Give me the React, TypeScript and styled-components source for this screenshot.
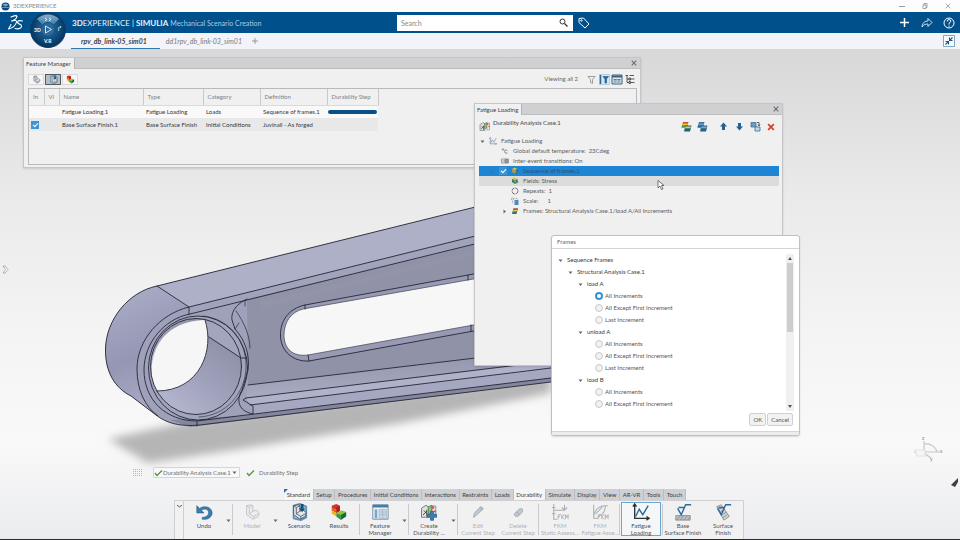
import React from 'react';
import styled, { createGlobalStyle, css } from 'styled-components';

const Global = createGlobalStyle`
  * { box-sizing: border-box; }
  body { margin: 0; font-family: Lato, "Noto Sans", sans-serif; font-size: 6px; line-height: 8px; color: #444; }
  button { border: 0; padding: 0; background: none; font: inherit; color: inherit; display: flex; align-items: center; justify-content: center; }
  input, select { font: inherit; color: inherit; margin: 0; }
  svg { display: block; flex: none; }
`;

const Page = styled.div`
  min-height: 100vh; display: flex; flex-direction: column; overflow: hidden; position: relative;
  border-bottom: 1px solid #2b2b2e;
`;

/* ---------- header ---------- */
const TitleBar = styled.div`
  height: 12px; display: flex; align-items: center; gap: 3px; padding: 0 8px 0 1px; background: #fdfdfd; color: #8a8a8a;
`;
const WindowButtons = styled.div`
  margin-left: auto; display: flex; gap: 15px;
  button { width: 8px; height: 8px; }
`;
const BlueBar = styled.header`
  height: 21px; display: grid; grid-template-columns: 397fr 176fr 387fr; align-items: center; background: #00508b; color: #fff;
`;
const Brand = styled.div`
  display: flex; align-items: center; padding-left: 7px;
`;
const BrandText = styled.h1`
  margin: 0 0 0 48px; font-size: 8px; line-height: 12px; font-weight: 400; display: flex; align-items: baseline; gap: 2px; white-space: nowrap; color: #eaf2f9;
  small { font-size: 7px; color: #a9cbe6; }
`;
const SearchBox = styled.label`
  height: 16px; background: #fff; display: flex; align-items: center; padding: 0 5px 0 4px; color: #888;
  input { flex: 1; min-width: 0; border: 0; outline: 0; background: none; padding: 0; font-size: 7px; }
  input::placeholder { color: #888; }
`;
const HeaderActions = styled.div`
  display: flex; align-items: center; gap: 9px; padding: 0 5px 0 4px;
  button { width: 13px; height: 13px; }
  button:first-child { margin-right: auto; }
`;
const CompassButton = styled.button`
  position: absolute; left: 29px; top: 11px; z-index: 3; border-radius: 50%;
`;
const TabBar = styled.nav`
  height: 16px; display: flex; align-items: stretch; padding: 0 5px 0 71px; background: #f2f4f9; color: #7c7c80;
  > button:last-child { margin-left: auto; }
`;
const DocTab = styled.button<{ $active?: boolean }>`
  padding: 0 10px 0 6px; font-size: 7px; font-style: italic;
  ${p => p.$active && css`color: #444; font-weight: 700; border-bottom: 1px solid #2a7ab0; padding: 1px 13px 0 10px;`}
`;

/* ---------- desktop ---------- */
const Workspace = styled.main`
  flex: 1; position: relative; display: flex; flex-direction: column; justify-content: flex-end;
  background: linear-gradient(#d8d8d9, #eaeaea 30%, #f4f4f4 58%, #f9f9f9 80%, #ebecef);
`;
const Scene = styled.svg`
  position: absolute; inset: 0; width: 100%; height: 100%;
`;
const Window = styled.section<{ $left: number; $top: number; $width: number; $height: number }>`
  position: absolute; left: ${p => p.$left}px; top: ${p => p.$top}px; width: ${p => p.$width}px; min-height: ${p => p.$height}px;
  display: flex; flex-direction: column; background: #f0f0f0; border: 1px solid #c6c6c8; box-shadow: 0 1px 2px #0002;
`;
const Caption = styled.div`
  height: 11px; display: flex; align-items: stretch; background: #cfd0d2; border-bottom: 1px solid #bdbdc0;
  h2 { margin: 0 0 -1px; padding: 1px 3px 0 2px; font-size: 6px; line-height: 10px; font-weight: 400; background: #f0f0f0; border-right: 1px solid #b5b5b8; }
  button { margin-left: auto; width: 12px; }
`;
const Toolbar = styled.div`
  display: flex; align-items: center; height: 19px; padding: 1px 4px 0 4px; gap: 1px;
  span { margin-left: auto; margin-right: 6px; color: #666; }
`;
const ToolButton = styled.button<{ $boxed?: boolean; $on?: boolean }>`
  width: ${p => (p.$boxed ? 16 : 12)}px; height: 11px;
  ${p => p.$boxed && css`border: 1px solid #d9d9db; background: #f6f6f6;`}
  ${p => p.$on && css`border: 1px solid #555a60; background: #b9bcc4;`}
`;
const TableFrame = styled.div`
  flex: 1; margin: 0 3px 2px 4px; border: 1px solid #b9b9bc;
`;
const FeatureTable = styled.table`
  border-collapse: collapse; table-layout: fixed; width: 349px;
  th, td { padding: 0 0 0 3px; text-align: left; font-weight: 400; height: 13px; overflow: hidden; white-space: nowrap; color: #383838; }
  th { height: 16px; padding-left: 4px; color: #7d8188; border-right: 1px solid #c9c9cc; border-bottom: 1px solid #dadadc; }
  tbody tr:first-child { background: #f9f9f9; }
  tbody tr:last-child { background: #e8e8e8; }
  td:first-child { padding-left: 2px; }
  td:last-child { padding: 0 1px; }
`;
const Progress = styled.div`
  height: 4px; border-radius: 2px; background: #0b4f87;
`;
const Check = styled.input`
  appearance: none; display: block; width: 8px; height: 8px; background: #3c94d6; position: relative;
  &::after { content: ""; position: absolute; left: 2px; top: 2px; width: 4px; height: 2px; border: solid #fff; border-width: 0 0 1px 1px; transform: rotate(-45deg); }
`;

const CaseHeader = styled.div`
  display: flex; height: 21px; padding: 2px 5px 0 4px; gap: 2px; align-items: center;
  > span { font-size: 6px; align-self: flex-start; margin-top: 2px; margin-right: auto; }
`;
const CaseTools = styled.div`
  display: flex; gap: 4px; margin-left: 7px;
`;
const Tree = styled.ul`
  list-style: none; margin: 0; padding: 0 3px 0 4px;
`;
const TreeRow = styled.li<{ $indent: number; $tone?: 'selected' | 'hover' }>`
  height: 10px; display: flex; align-items: center; padding-left: ${p => p.$indent}px; gap: 4px; color: #5b5d62; white-space: pre;
  ${p => p.$tone === 'selected' && css`background: #1e85d4; color: #2b5279;`}
  ${p => p.$tone === 'hover' && css`background: #dcdcdd;`}
`;
const RowIcon = styled.span`
  svg { width: 8px; height: 8px; }
`;

const Dialog = styled(Window)`
  background: #fff; border-radius: 3px; border-color: #bfc0c4; overflow: hidden;
  h2 { margin: 0; padding: 0 5px; font-size: 6px; line-height: 12px; height: 13px; font-weight: 400; color: #666; border-bottom: 1px solid #d5d5d8; }
`;
const DialogBody = styled.div`
  flex: 1; display: flex; justify-content: space-between; padding: 5px 5px 0 6px;
`;
const FrameTree = styled.div`
  display: flex; flex-direction: column;
`;
const Branch = styled.div<{ $depth: number }>`
  height: 12px; display: flex; align-items: center; gap: 4px; padding-left: ${p => p.$depth * 10}px; color: #3a3a3a;
`;
const Option = styled.label`
  height: 12px; display: flex; align-items: center; gap: 2px; padding-left: 37px; color: #55575b;
`;
const Radio = styled.input`
  appearance: none; width: 8px; height: 8px; border-radius: 50%; border: 1px solid #c9cacd; background: #f1f1f1;
  &:checked { border: 2px solid #3394cf; background: #fff; }
`;
const ScrollTrack = styled.div`
  width: 8px; height: 157px; background: #f0f0f0; display: flex; flex-direction: column; align-items: center; justify-content: space-between; padding: 3px 0;
`;
const ScrollThumb = styled.div`
  width: 6px; height: 69px; background: #cdcdcf; margin-bottom: auto; margin-top: 3px;
`;
const DialogButtons = styled.div`
  display: flex; justify-content: flex-end; gap: 1px; padding: 2px 6px 5px;
  button { height: 13px; padding: 0 3px; min-width: 17px; border: 1px solid #d0d0d3; border-radius: 2px; background: #f2f2f3; color: #555; }
`;
const Grip = styled.div`
  height: 4px; background: #ededf0; border-top: 1px solid #d5d5d8;
`;

/* ---------- bottom bars ---------- */
const StatusBar = styled.div`
  position: relative; display: flex; align-items: center; margin: 0 0 11px 133px; color: #6d7075;
`;
const CaseSelect = styled.div`
  margin: 0 6px 0 10px; height: 11px; display: flex; align-items: center; border: 1px solid #d3d4d8; border-radius: 1px; background: #f8f8f9; padding: 0 2px 0 0;
  select { appearance: none; border: 0; background: none; padding: 0; outline: 0; width: 68px; margin: 0 1px 0 0; height: 9px; }
`;
const StepLabel = styled.span`margin-left: 4px;`;
const RibbonTabs = styled.nav`
  position: relative; display: flex; margin-left: 284px; width: 402px; height: 11px;
`;
const RibbonTab = styled.button<{ $active?: boolean; $first?: boolean }>`
  flex: 1 0 auto; white-space: nowrap; background: ${p => (p.$active || p.$first ? '#f5f5f6' : '#cfd0d3')}; color: #3d3f43; border-right: 1px solid #bcbdc1; position: relative;
  ${p => p.$first && css`&::before { content: ""; position: absolute; left: 0; top: 0; border: 2px solid; border-color: #2772a8 transparent transparent #2772a8; }`}
`;
const Ribbon = styled.div`
  position: relative; display: flex; align-self: flex-start; margin-left: 174px; height: 39px; background: #f1f1f2; border: solid #cfd0d3; border-width: 1px 1px 0;
`;
const RibbonHandle = styled.button`
  width: 9px; align-items: flex-start; padding-top: 4px; border-right: 1px solid #cfd0d3;
`;
const RibbonItem = styled.button<{ $width?: number; $disabled?: boolean; $active?: boolean }>`
  width: ${p => p.$width ?? 40}px; flex-direction: column; justify-content: flex-start; padding-top: 2px; line-height: 7px; color: ${p => (p.$disabled ? '#b0b2b6' : '#505258')}; white-space: nowrap;
  svg { width: 18px; height: 18px; margin-bottom: 1px; }
  ${p => p.$disabled && css`svg { opacity: .75; }`}
  ${p => p.$active && css`border: 1px solid #6ea6cc; margin: 1px; padding-top: 0; height: 34px; background: #f5f6f7;`}
`;
const MenuArrow = styled.button`
  width: 8px; padding-top: 1px;
`;
const Divider = styled.i`
  width: 1px; margin: 3px 0 4px; background: #c9cacd;
`;
const EdgeButton = styled.button`
  position: absolute; left: 1px; top: 215px; width: 8px; height: 10px;
`;
const Pointer = styled.svg`
  position: absolute; left: 657px; top: 131px;
`;

/* ---------- icons ---------- */
const Caret = ({ right, color = '#666' }: { right?: boolean; color?: string }) => (
  <svg width="5" height="5" viewBox="0 0 10 10"><path d={right ? 'M3 1l5 4-5 4z' : 'M1 3h8L5 8z'} fill={color} /></svg>
);
const CloseX = ({ color = '#6d6e72', w = 2, size = 8 }: { color?: string; w?: number; size?: number }) => (
  <svg width={size} height={size} viewBox="0 0 14 14"><path d="M3 3l8 8M11 3l-8 8" stroke={color} strokeWidth={w} /></svg>
);
const Tick = () => (
  <svg width="9" height="8" viewBox="0 0 18 16"><path d="M2 8l4 5L16 3" fill="none" stroke="#55963a" strokeWidth="2.6" /></svg>
);
const Part = ({ size = 10, tone = 'plain' }: { size?: number; tone?: 'plain' | 'scenario' | 'pale' }) => (
  <svg width={size} height={size} viewBox="0 0 20 20" strokeLinejoin="round">
    {tone === 'scenario' && <path d="M4 3l7-2 7 3v12l-6 3-8-2z" fill="#aecbe0" stroke="#5d93ba" strokeWidth="2" />}
    <path d="M4 3l5-1 2 1v6l4-1 3 3-1 4-6 3-7-5z" fill={tone === 'pale' ? '#ececee' : '#e2e5e9'} stroke={tone === 'pale' ? '#b5b6ba' : '#565d66'} strokeWidth="1.1" />
    <path d="M4 3l3 2v7l5 3 5-3M7 5l4-2M11 9l-4 3M12 15v3" fill="none" stroke={tone === 'pale' ? '#b5b6ba' : '#565d66'} />
    {tone === 'scenario' && <path d="M12 1h3v5h2l-3.500 4L10 6h2z" fill="#174d7d" />}
  </svg>
);
const Results = ({ size = 10 }: { size?: number }) => (
  <svg width={size} height={size} viewBox="0 0 20 20">
    <path d="M2 3l5-2 4 2v6l-4 2-5-3z" fill="#d2322a" /><path d="M7 5l4-2v6l-4 2z" fill="#b01f1f" />
    <path d="M2 8l5 3v4l-5-3z" fill="#f0b521" /><path d="M7 11l6-3 5 2-6 3z" fill="#8fc43b" />
    <path d="M7 11l5 2v6l-5-4z" fill="#2f9a41" /><path d="M12 13l6-3v5l-6 4z" fill="#1d6b38" /><path d="M2 5l5 2v3L2 8z" fill="#e8662a" />
  </svg>
);
const Fields = ({ selected }: { selected?: boolean }) => (
  <svg viewBox="0 0 16 16"><path d="M2 4l5-3 6 3-5 3z" fill="#e7b935" /><path d="M2 4l6 3v7l-6-4z" fill={selected ? '#c88f34' : '#2f7f52'} /><path d="M8 7l5-3v4l2 2-7 4z" fill="#2b5f93" /><path d="M5 7l4-1 3 4-4 2z" fill="#70b158" /></svg>
);
const FrameStack = ({ blue }: { blue?: boolean }) => (
  <svg width="11" height="11" viewBox="0 0 22 22">
    <path d="M4 2h11l-3 11H1z" fill={blue ? '#3b739e' : '#d9482f'} /><path d="M3 5h11l-1 4H2z" fill={blue ? '#6b9fc4' : '#f2c230'} /><path d="M2 9h11l-1 4H1z" fill={blue ? '#2b608c' : '#48a04b'} />
    <path d="M9 9h12l-3 12H6z" fill={blue ? '#2b608c' : '#245b88'} /><path d="M9 11h11l-1 3H8z" fill={blue ? '#7da9c8' : '#e8cf3a'} /><path d="M8 14h11l-1 2H7z" fill={blue ? '#3b739e' : '#43935b'} />
  </svg>
);
const SingleFrame = () => (
  <svg viewBox="0 0 16 16"><path d="M5 3h9l-3 11H2z" fill="#2c6592" /><path d="M5 3h9l-1 3H4z" fill="#d9482f" /><path d="M4 6h9l-1 3H3z" fill="#f0c534" /><path d="M3 9h9l-1 2H3z" fill="#48a04b" /></svg>
);
const MoveArrow = ({ down }: { down?: boolean }) => (
  <svg width="9" height="9" viewBox="0 0 18 18"><path d={down ? 'M6 2h6v7h4l-7 8-7-8h4z' : 'M6 16h6V9h4L9 1 2 9h4z'} fill="#28618f" /></svg>
);
const Convert = () => (
  <svg width="11" height="11" viewBox="0 0 22 22"><path d="M2 3h10v9H2z" fill="#6c9dc0" stroke="#3b6e96" strokeWidth="1.5" /><path d="M10 12h10v8H10z" fill="#c4dae8" stroke="#2c648f" strokeWidth="1.5" /><path d="M14 3h4v6M16 7l2 3 2-3" fill="none" stroke="#333" strokeWidth="1.500" /></svg>
);
const CaseIcon = ({ plus }: { plus?: boolean }) => (
  <svg width="12" height="12" viewBox="0 0 24 24">
    <path d="M2 7l6-4 4 3v13H2z" fill="#dfe1e3" stroke="#55585c" /><path d="M5 10l4 4M9 9v9M4 16l5-5" stroke="#444" strokeWidth="1.300" />
    <path d="M11 5l5-2v10l-5 3z" fill="#8cc476" stroke="#4b6f42" /><path d="M16 4h5v14h-5z" fill="#e9eaec" stroke="#77797d" />
    <circle cx="17" cy="6" r="2" fill="#d9534a" /><circle cx="20" cy="11" r="1.500" fill="#d9534a" />
    {plus && <path d="M14 11h4v4h4v4h-4v4h-4v-4h-4v-4h4z" fill="#3d7eb2" stroke="#275d8a" />}
  </svg>
);
const Chart = ({ large }: { large?: boolean }) => (
  <svg viewBox="0 0 20 20" fill="none"><path d="M3 2v15h16M1 4l2-3 2 3M16 15l3 2-3 2" stroke={large ? '#2d3035' : '#777'} strokeWidth="1.500" /><path d="M4 15l4-8 4 6 6-10" stroke={large ? '#2c6b9b' : '#5486ab'} strokeWidth="1.600" /></svg>
);
const Pencil = ({ erase }: { erase?: boolean }) => (
  <svg viewBox="0 0 20 20"><path d={erase ? 'M6 12l5-5q2-2 4 0 1 2-1 4l-4 4q-5 0-4-3z' : 'M5 16l1-5 7-7 3 2-7 7z'} fill="#aebbc3" stroke="#8796a0" /><path d={erase ? 'M8 10l4 3' : 'M12 5l3 3'} stroke="#7e8f99" /></svg>
);
const FkmIcon = ({ curve }: { curve?: boolean }) => (
  <svg viewBox="0 0 20 20" fill="none" stroke="#97999e" strokeWidth="1.200">
    {curve ? <path d="M3 2v15h5M3 14C5 6 9 3 16 3c0 5-3 10-8 12M16 3h3M5 12l8-8" /> : <path d="M3 1v17h4M1 5h4M3 8h13M1 12h4M15 2v6M12 5l3 3 3-3" />}
    <path d="M8 18v-5h3M8 15h2M12 18v-5M15 13l-3 2 3 3M16 18v-5l1.500 3 1.500-3v5" strokeWidth="1" />
  </svg>
);
const SurfaceIcon = ({ hatch }: { hatch?: boolean }) => (
  <svg viewBox="0 0 20 20" fill="none">
    {hatch ? <path d="M3 4l5-2 9 13-6 4z" fill="#d3d5d8" stroke="#8b8d92" /> : <path d="M2 14h16v5H2z" fill="#bfc1c5" stroke="#8b8d92" />}
    {hatch ? <path d="M5 7l5-2M7 10l5-3M9 13l5-3M10 16l5-3" stroke="#8b8d92" /> : <path d="M3 19l4-5M7 19l4-5M11 19l4-5M15 19l3-4" stroke="#8b8d92" />}
    <path d="M4 6l4 7 5-11h6M5 5h7" stroke="#2f6c9c" strokeWidth="1.600" />
  </svg>
);
const Filter = ({ on }: { on?: boolean }) => (
  <svg width="11" height="11" viewBox="0 0 22 22">
    {on && <><path d="M1 1h20v20H1z" fill="#d7e6f1" stroke="#83aeca" /><path d="M3 2v18" stroke="#2b6896" strokeWidth="3" /></>}
    <path d={on ? 'M8 5h11l-4 5v8h-3v-8z' : 'M4 5h14l-5 6v8l-4-2v-6z'} fill={on ? '#2b6896' : 'none'} stroke={on ? '#2b6896' : '#818489'} strokeWidth="1.500" />
  </svg>
);
const TableIcon = ({ large }: { large?: boolean }) => large ? (
  <svg viewBox="0 0 20 20"><path d="M2 2h17v16H2z" fill="#f4f7fa" stroke="#6f8798" /><path d="M2 2h17v3H2z" fill="#3f7faf" /><path d="M4 7h3v10H4z" fill="#75a8ca" /><path d="M9 7h8v10H9z" fill="#cfdde7" stroke="#9fb7c8" /><path d="M9 10h8M9 13h8M13 7v10" stroke="#9fb7c8" /></svg>
) : (
  <svg width="12" height="11" viewBox="0 0 24 22"><path d="M2 2h20v18H2z" fill="#dfe9f1" stroke="#34627f" strokeWidth="2" /><path d="M2 3h20v4H2z" fill="#34627f" /><path d="M5 10h14v3H5zM5 15h14v2H5z" fill="#5b7d95" /><path d="M12 8v11" stroke="#dfe9f1" /></svg>
);
const TreeIcon = () => (
  <svg width="10" height="10" viewBox="0 0 20 20" stroke="#333" strokeWidth="1.600" fill="none"><path d="M1 3h5M4 3v14h4M4 10h4M9 3h9M12 10h7M12 17h7M8 8h3v4H8zM8 15h3v4H8z" /></svg>
);
const Compass = () => (
  <svg width="38" height="38" viewBox="0 0 38 38">
    <defs>
      <radialGradient id="cmp" cx=".5" cy=".45"><stop offset="0" stopColor="#2e77aa" /><stop offset=".6" stopColor="#125083" /><stop offset="1" stopColor="#08365f" /></radialGradient>
      <linearGradient id="cmpTop" x2="0" y2="1"><stop offset="0" stopColor="#a9c8df" /><stop offset="1" stopColor="#3f82b2" /></linearGradient>
    </defs>
    <circle cx="19" cy="19" r="17.500" fill="url(#cmp)" stroke="#0a3d6a" />
    <path d="M8 8a15.500 15.500 0 0 1 22 0l-6 6a7 7 0 0 0-10 0z" fill="url(#cmpTop)" opacity=".8" />
    <circle cx="19" cy="18.500" r="7" fill="#2a699b" stroke="#16507f" />
    <path d="M16.500 15l6 3.500-6 3.500z" fill="none" stroke="#e6f1f8" strokeWidth=".9" />
    <g fill="#fff" fontSize="5" fontWeight="700"><text x="5" y="21">3D</text><text x="15" y="32">V.R</text><text x="29" y="20" fontStyle="italic">i²</text></g>
    <path d="M16 7l2 1.500L16 10M20 7l2 1.500L20 10" stroke="#e8f2f8" fill="none" />
  </svg>
);

const PartScene = () => (
  <Scene viewBox="0 49 960 490" preserveAspectRatio="xMinYMin slice">
    <defs>
      <linearGradient id="side" x1="0" y1="0" x2=".3" y2="1"><stop offset="0" stopColor="#aeb1c9" /><stop offset=".6" stopColor="#9496b3" /><stop offset="1" stopColor="#a9abc4" /></linearGradient>
      <linearGradient id="bore" x1=".2" y1="1" x2=".8" y2=".2"><stop offset="0" stopColor="#b7b9d2" /><stop offset=".5" stopColor="#a0a2bc" /><stop offset="1" stopColor="#8e90a7" /></linearGradient>
      <linearGradient id="ledge" x2=".12" y2="1"><stop offset="0" stopColor="#8f91a8" /><stop offset="1" stopColor="#a9abc3" /></linearGradient>
      <filter id="soft" x="-10%" y="-40%" width="120%" height="180%"><feGaussianBlur stdDeviation="4" /></filter>
    </defs>
    <path d="M108 439l82-18 361-46v18l-150 30-160 26-93 14z" fill="#aaaaab" filter="url(#soft)" opacity=".85" />
    <path d="M157 286C128 292 106 320 105.500 349C105 372 115 388 131 396L156 415C166 423 180 427 200 425L551 382L560 186Z" fill="#9fa1ba" />
    <path d="M157 286C128 292 106 320 105.500 349C105 372 115 388 131 396L156 415C143 403 137 388 137 369C137 340 160 314 189 307Z" fill="url(#side)" />
    <path d="M157 286L560 186V215L189 307Z" fill="#adb0c7" />
    <path d="M189 307L560 215V224L190 314Z" fill="#a1a3bd" />
    <path d="M247 299L560 224V350L248 385Z" fill="#9092a7" />
    <path d="M260 302L474 251V255L262 308Z" fill="#a0a2b8" opacity=".2" />
    <path d="M248 385L560 348V366L246 398Z" fill="url(#ledge)" />
    <path d="M246 398L551 362V369L250 405Z" fill="#b0b2ca" />
    <path d="M250 405L551 368V378L253 415Z" fill="#a6a8c1" />
    <path d="M190 427L551 382V378L240 416L170 420Z" fill="#84869d" />
    <path d="M479 273L305 305C288 309 280.500 321 280.500 335C280.500 352 294 362 309 361L479 330Z" fill="#989ab4" stroke="#252737" strokeWidth=".9" />
    <path d="M479 278L303 309C291 312 284 322 284 335C284 349 293 357 308 355L479 324Z" fill="#f7f7f7" stroke="#3e4056" strokeWidth=".7" />
    <ellipse cx="198" cy="368" rx="49.500" ry="52" fill="#a3a5be" />
    <ellipse cx="196" cy="366.500" rx="45.500" ry="48" fill="url(#bore)" />
    <path d="M205 320L209 337L241 358A45.500 48 0 0 0 205 320Z" fill="#a3a5be" />
    <path d="M205 320C215 350 200 391 157 391C144 369 153 321 205 320Z" fill="#f6f6f6" />
    <g fill="none" stroke="#252737" strokeWidth=".9" strokeLinecap="round">
      <path d="M560 186L157 286C128 292 106 320 105.500 349C105 372 115 388 131 396L156 415C166 423 180 427 200 425L551 382M197 426v-4" />
      <path d="M560 215L189 307C160 314 137 340 137 369C137 390 145 407 158 416" />
      <path d="M560 223L190 314C164 319 144 343 144 370C144 400 166 421 197 421L551 378" />
      <path d="M157 286L189 307V314M209 337L241 358H247M205 320C215 350 200 391 157 391" />
      <ellipse cx="198" cy="368" rx="49.500" ry="52" /><ellipse cx="196" cy="366.500" rx="45.500" ry="48" />
      <path d="M203 316C230 319 246 341 246 366C246 393 226 416 199 417" strokeWidth=".6" />
      <path d="M247 299C234 305 231 314 232 320L235 329C245 340 250 354 248 370L242 390C236 400 238 411 253 414V406L243 400L246 398" />
      <path d="M245 301v5M236 311C244 322 250 336 250 348M235 329l4-6" strokeWidth=".7" />
      <path d="M248 385L560 348M246 398L551 361M250 405L551 368" />
      <path d="M305 305v4M309 361l-1-6M468 275v5M471 331v-6" />
    </g>
    <g fill="none" stroke="#c4c6ca" strokeWidth="1.200"><path d="M914 452h26M924 441v12M924 444c8-1 12 4 13 8M924 453l7 5" /><path d="M915 450h10v6h-8z" fill="#f6f6f6" stroke="#e2e2e4" /></g>
    <g fill="#888" fontSize="5"><text x="922" y="440">z</text><text x="940" y="453">x</text><text x="930" y="461">y</text></g>
    <path d="M951 485l7-7v4l-3 5z" fill="#3d3f43" />
  </Scene>
);

/* ---------- data ---------- */
const ribbonTabs = ['Standard', 'Setup', 'Procedures', 'Initial Conditions', 'Interactions', 'Restraints', 'Loads', 'Durability', 'Simulate', 'Display', 'View', 'AR-VR', 'Tools', 'Touch'];
const increments = ['All Increments', 'All Except First Increment', 'Last Increment'];
const loads = [{ name: 'load A', options: increments }, { name: 'unload A', options: increments }, { name: 'load B', options: increments.slice(0, 2) }];

export default function App() {
  return (
    <Page>
      <Global />
      <TitleBar>
        <svg width="9" height="9" viewBox="0 0 18 18"><circle cx="9" cy="9" r="8" fill="#0d4a7c" /><path d="M3 6q6-6 12 0L9 9z" fill="#77a8cb" /><path d="M1 11h16" stroke="#5d95bf" strokeWidth="2" /></svg>
        3DEXPERIENCE
        <WindowButtons>
          <button aria-label="Minimize"><svg width="6" height="6"><path d="M0 3.500h6" stroke="#999" /></svg></button>
          <button aria-label="Restore"><svg width="6" height="6" viewBox="0 0 12 12" fill="none" stroke="#888" strokeWidth="1.500"><path d="M2 4h6v7H2zM4 4V1h6v8H8" /></svg></button>
          <button aria-label="Close"><CloseX color="#999" w={1.5} /></button>
        </WindowButtons>
      </TitleBar>
      <BlueBar>
        <Brand>
          <svg width="17" height="16" viewBox="0 0 34 32" fill="none" stroke="#fff" strokeWidth="2.200" strokeLinecap="round" strokeLinejoin="round">
            <path d="M8 4Q19-1 20 3Q19 9 9 12Q20 9 19 14Q17 24 3 28L8 19M31 12Q22 10 21 14Q21 17 27 19Q31 22 27 26Q22 29 16 27" />
          </svg>
          <BrandText><span><b>3D</b>EXPERIENCE</span><span>|</span><b>SIMULIA</b><small>Mechanical Scenario Creation</small></BrandText>
        </Brand>
        <SearchBox>
          <input placeholder="Search" aria-label="Search" />
          <svg width="9" height="9" viewBox="0 0 18 18" fill="none" stroke="#333" strokeWidth="2"><circle cx="7" cy="7" r="5" /><path d="M11 11l6 6" strokeWidth="2.500" /></svg>
        </SearchBox>
        <HeaderActions>
          <button aria-label="Tags"><svg width="12" height="12" viewBox="0 0 24 24" fill="none" stroke="#fff" strokeWidth="2"><path d="M2 3l9-1 11 12-8 8L2 11z" /><circle cx="7" cy="7" r="1.500" /></svg></button>
          <button aria-label="Add"><svg width="11" height="11" viewBox="0 0 11 11"><path d="M5.500 1v9M1 5.500h9" stroke="#fff" strokeWidth="1.500" /></svg></button>
          <button aria-label="Share"><svg width="12" height="11" viewBox="0 0 24 22" fill="none" stroke="#e1edf6" strokeWidth="1.800" strokeLinejoin="round"><path d="M2 20C3 11 8 8 14 8V3l8 8-8 8v-5c-5 0-9 1-12 6z" /></svg></button>
          <button aria-label="Help"><svg width="12" height="12" viewBox="0 0 24 24" fill="none" stroke="#fff" strokeWidth="2"><circle cx="12" cy="12" r="10" /><path d="M8.500 9q0-4 3.500-4t3.500 3.500q0 2-3.500 4v2.500M12 17v2.500" /></svg></button>
        </HeaderActions>
      </BlueBar>
      <CompassButton aria-label="Compass"><Compass /></CompassButton>
      <TabBar>
        <DocTab $active>rpv_db_link-05_sim01</DocTab>
        <DocTab>dd1rpv_db_link-03_sim01</DocTab>
        <button aria-label="New tab"><svg width="6" height="6"><path d="M3 0v6M0 3h6" stroke="#999" /></svg></button>
        <button aria-label="Collapse"><svg width="12" height="12" viewBox="0 0 24 24"><path d="M1 1h22v22H1z" fill="#f8fafc" stroke="#5c8db1" strokeWidth="1.500" /><path d="M19 5l-6 6M13 5v6h6M5 19l6-6M11 19v-6H5" fill="none" stroke="#1e5584" strokeWidth="2.200" /></svg></button>
      </TabBar>
      <Workspace>
        <PartScene />
        <EdgeButton aria-label="Open side panel"><svg width="7" height="9" viewBox="0 0 14 18"><path d="M2 2h4l6 7-6 7H2l5-7z" fill="#fff" stroke="#999" strokeWidth="1.500" /></svg></EdgeButton>

        <Window $left={23} $top={8} $width={618} $height={111}>
          <Caption><h2>Feature Manager</h2><button aria-label="Close"><CloseX /></button></Caption>
          <Toolbar>
            <ToolButton $boxed aria-label="Model"><Part size={9} /></ToolButton>
            <ToolButton $boxed $on aria-label="Scenario"><Part size={9} tone="scenario" /></ToolButton>
            <ToolButton $boxed aria-label="Results"><Results size={9} /></ToolButton>
            <span>Viewing all 2</span>
            <ToolButton aria-label="Filter"><Filter /></ToolButton>
            <ToolButton aria-label="Column filter"><Filter on /></ToolButton>
            <ToolButton aria-label="Table view"><TableIcon /></ToolButton>
            <ToolButton aria-label="Tree view"><TreeIcon /></ToolButton>
          </Toolbar>
          <TableFrame>
            <FeatureTable>
              <colgroup>{[15, 15, 84, 60, 57, 67, 51].map((w, i) => <col key={i} width={w} />)}</colgroup>
              <thead><tr><th>In</th><th>Vi</th><th>Name</th><th>Type</th><th>Category</th><th>Definition</th><th>Durability Step</th></tr></thead>
              <tbody>
                <tr><td /><td /><td>Fatigue Loading.1</td><td>Fatigue Loading</td><td>Loads</td><td>Sequence of frames.1</td><td><Progress /></td></tr>
                <tr><td><Check type="checkbox" defaultChecked aria-label="Include Base Surface Finish.1" /></td><td /><td>Base Surface Finish.1</td><td>Base Surface Finish</td><td>Initial Conditions</td><td>Juvinall - As forged</td><td /></tr>
              </tbody>
            </FeatureTable>
          </TableFrame>
        </Window>

        <Window $left={474} $top={54} $width={309} $height={263}>
          <Caption><h2>Fatigue Loading</h2><button aria-label="Close"><CloseX /></button></Caption>
          <CaseHeader>
            <CaseIcon /><span>Durability Analysis Case.1</span>
            <CaseTools><ToolButton aria-label="Add frames"><FrameStack /></ToolButton><ToolButton aria-label="Add sequence"><FrameStack blue /></ToolButton></CaseTools>
            <CaseTools><ToolButton aria-label="Move up"><MoveArrow /></ToolButton><ToolButton aria-label="Move down"><MoveArrow down /></ToolButton><ToolButton aria-label="Convert"><Convert /></ToolButton><ToolButton aria-label="Delete"><CloseX color="#d8402a" w={2.4} size={10} /></ToolButton></CaseTools>
          </CaseHeader>
          <Tree>
            <TreeRow $indent={1}><Caret /><RowIcon><Chart /></RowIcon>Fatigue Loading</TreeRow>
            <TreeRow $indent={22}><RowIcon><svg viewBox="0 0 16 16" fill="none" stroke="#666" strokeWidth="1.400"><circle cx="4" cy="5" r="1.500" /><path d="M13 7q-6-3-6 2 0 5 6 3" /></svg></RowIcon>Global default temperature:  23Cdeg</TreeRow>
            <TreeRow $indent={22}><RowIcon><svg viewBox="0 0 16 16" fill="none" stroke="#777" strokeWidth="1.400"><path d="M1 4h14v8H1z" /><path d="M3 8h5M8 5v6h5V5z" fill="#999" /></svg></RowIcon>Inter-event transitions: On</TreeRow>
            <TreeRow $indent={11} $tone="selected"><Caret color="#3976a8" /><Check type="checkbox" defaultChecked aria-label="Sequence of frames.1" /><RowIcon><Fields selected /></RowIcon>Sequence of frames.1</TreeRow>
            <TreeRow $indent={32} $tone="hover"><RowIcon><Fields /></RowIcon>Fields: Stress</TreeRow>
            <TreeRow $indent={32}><RowIcon><svg viewBox="0 0 16 16" fill="none" stroke="#555" strokeWidth="1.500"><circle cx="8" cy="8" r="6" strokeDasharray="8 1.400" /></svg></RowIcon>Repeats:  1</TreeRow>
            <TreeRow $indent={32}><RowIcon><svg viewBox="0 0 16 16"><path d="M1 2h4v4H1z" fill="none" stroke="#888" /><path d="M7 6h8v10H7z" fill="#4b8ebd" /><path d="M7 3h6v2M3 8v6" stroke="#777" fill="none" strokeDasharray="2 1" /></svg></RowIcon>Scale:      1</TreeRow>
            <TreeRow $indent={23}><Caret right /><RowIcon><SingleFrame /></RowIcon>Frames: Structural Analysis Case.1/load A/All Increments</TreeRow>
          </Tree>
        </Window>

        <Dialog $left={551} $top={186} $width={249} $height={201}>
          <h2>Frames</h2>
          <DialogBody>
            <FrameTree>
              <Branch $depth={0}><Caret />Sequence Frames</Branch>
              <Branch $depth={1}><Caret />Structural Analysis Case.1</Branch>
              {loads.map(load => (
                <React.Fragment key={load.name}>
                  <Branch $depth={2}><Caret />{load.name}</Branch>
                  {load.options.map((option, i) => (
                    <Option key={option}><Radio type="radio" name="frames" defaultChecked={load.name === 'load A' && i === 0} />{option}</Option>
                  ))}
                </React.Fragment>
              ))}
            </FrameTree>
            <ScrollTrack>
              <svg width="4" height="3"><path d="M0 3l2-3 2 3z" fill="#555" /></svg>
              <ScrollThumb />
              <svg width="4" height="3"><path d="M0 0h4L2 3z" fill="#555" /></svg>
            </ScrollTrack>
          </DialogBody>
          <DialogButtons><button>OK</button><button>Cancel</button></DialogButtons>
          <Grip />
        </Dialog>

        <StatusBar>
          <svg width="10" height="10" viewBox="0 0 10 10" stroke="#b5b6ba" strokeDasharray="1 1"><path d="M0 1.500h10M0 3.500h10M0 5.500h10M0 7.500h10" /></svg>
          <CaseSelect>
            <Tick />
            <select aria-label="Active case"><option>Durability Analysis Case.1</option></select>
            <Caret />
          </CaseSelect>
          <Tick /><StepLabel>Durability Step</StepLabel>
        </StatusBar>
        <RibbonTabs>
          {ribbonTabs.map((tab, i) => <RibbonTab key={tab} $first={i === 0} $active={tab === 'Durability'}>{tab}</RibbonTab>)}
        </RibbonTabs>
        <Ribbon>
          <RibbonHandle aria-label="Collapse ribbon"><svg width="5" height="3"><path d="M0 0l2.500 2L5 0" fill="none" stroke="#555" /></svg></RibbonHandle>
          <RibbonItem><svg viewBox="0 0 20 20"><path d="M2 3v8h8L7 8c5-3 9 0 8 4-1 3-4 4-7 4v2c7 1 11-3 11-7 0-6-8-9-14-5z" fill="#3c7db1" stroke="#24608f" strokeWidth=".7" /></svg>Undo</RibbonItem>
          <MenuArrow aria-label="Undo history"><Caret /></MenuArrow><Divider />
          <RibbonItem $width={38} $disabled><Part tone="pale" />Model</RibbonItem>
          <MenuArrow aria-label="Model options"><Caret /></MenuArrow>
          <RibbonItem><Part tone="scenario" />Scenario</RibbonItem>
          <RibbonItem><Results />Results</RibbonItem><Divider />
          <RibbonItem><TableIcon large />Feature<br />Manager</RibbonItem>
          <MenuArrow aria-label="Manager options"><Caret /></MenuArrow><Divider />
          <RibbonItem><CaseIcon plus />Create<br />Durability ...</RibbonItem>
          <MenuArrow aria-label="Create options"><Caret /></MenuArrow><Divider />
          <RibbonItem $disabled><Pencil />Edit<br />Current Step</RibbonItem>
          <RibbonItem $disabled><Pencil erase />Delete<br />Current Step</RibbonItem><Divider />
          <RibbonItem $width={42} $disabled><FkmIcon />FKM<br />Static Assess...</RibbonItem>
          <RibbonItem $width={38} $disabled><FkmIcon curve />FKM<br />Fatigue Asse...</RibbonItem><Divider />
          <RibbonItem $active><Chart large />Fatigue<br />Loading</RibbonItem><Divider />
          <RibbonItem><SurfaceIcon />Base<br />Surface Finish</RibbonItem>
          <RibbonItem><SurfaceIcon hatch />Surface<br />Finish</RibbonItem>
        </Ribbon>
        <Pointer width="7" height="10" viewBox="0 0 14 20"><path d="M2 1v15l4-4 3 7 3-1-3-7h5z" fill="#fff" stroke="#333" strokeWidth="1.300" /></Pointer>
      </Workspace>
    </Page>
  );
}
